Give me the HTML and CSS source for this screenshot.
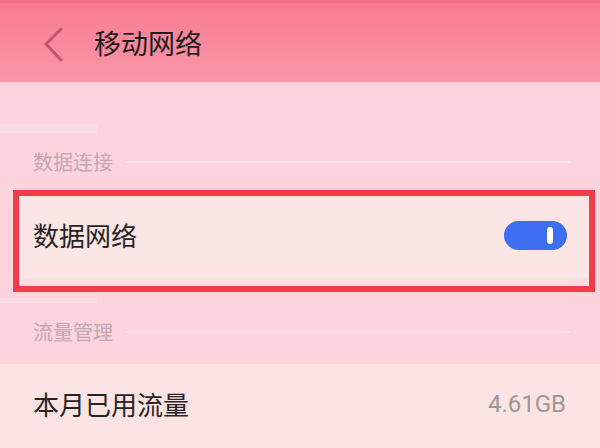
FILE: index.html
```html
<!DOCTYPE html>
<html lang="zh-CN">
<head>
  <meta charset="UTF-8">
  <title>移动网络</title>
  <link rel="stylesheet" href="styles.css">
</head>
<body>

<div class="page">
  <div class="header">
    <svg class="back" width="20" height="36" viewBox="0 0 20 36">
      <path d="M17 3 L2 18 L17 34" fill="none" stroke="#c4546f" stroke-width="3" stroke-linecap="round" stroke-linejoin="round"/>
    </svg>
    <h1 class="title">移动网络</h1>
  </div>

  <div class="main">
    <div class="ghost-bar top"></div>

    <div class="section-head">
      <span class="section-label">数据连接</span>
      <span class="section-line"></span>
    </div>

    <div class="highlight">
      <div class="row">
        <span class="row-text">数据网络</span>
        <span class="switch"><span class="knob"></span></span>
      </div>
      <div class="row-foot"></div>
    </div>

    <div class="ghost-bar bottom"></div>

    <div class="section-head second">
      <span class="section-label">流量管理</span>
      <span class="section-line"></span>
    </div>

    <div class="row usage">
      <span class="row-text">本月已用流量</span>
      <span class="value">4.61GB</span>
    </div>
  </div>
</div>

</body>
</html>
```

FILE: styles.css
```css
body { margin: 0; font-family: "Noto Sans CJK SC", "Noto Sans", sans-serif; background: #fdd3de; }
.page { width: 600px; height: 448px; overflow: hidden; }
.header { height: 79px; border-top: 3px solid #ef7088; background: linear-gradient(#f87b91, #fa96a8); display: flex; align-items: center; padding-left: 44px; }
.back { display: block; margin-top: 2px; }
.title { margin: 0 0 0 30px; font-size: 27px; font-weight: 400; color: #1c1c1c; line-height: 1; }
.main { background: #fdd3de; }
.ghost-bar { width: 97px; background: #fadde2; }
.ghost-bar.top { height: 9px; margin-top: 42px; }
.ghost-bar.bottom { height: 5px; margin-top: 6px; }
.section-head { display: flex; align-items: center; height: 28px; padding: 0 30px 0 33px; margin-top: 15px; }
.section-head.second { margin-top: 15px; }
.section-label { font-size: 20px; color: #c0a9b1; line-height: 28px; }
.section-line { flex: 1; height: 2px; background: #f8e3e7; margin-left: 12px; }
.highlight { margin: 14px 5px 0 13px; border: 6px solid #f23c47; background: #fbe5e5; }
.row { display: flex; align-items: center; justify-content: space-between; height: 82px; padding: 0 22px 0 14px; }
.row-text { font-size: 26px; color: #252525; line-height: 1; margin-top: -4px; }
.row-foot { height: 8px; background: #fcdde1; }
.switch { width: 63px; height: 29px; border-radius: 15px; background: #3f6ef1; display: flex; align-items: center; justify-content: flex-end; padding-right: 14px; box-sizing: border-box; margin-top: -4px; }
.knob { width: 6px; height: 17px; border-radius: 3px; background: #fff; }
.usage { margin-top: 18px; height: 90px; background: #fbe3e3; padding: 0 34px 0 33px; }
.usage .row-text { margin-top: -10px; }
.value { font-family: Roboto, "Noto Sans", sans-serif; font-size: 24px; color: #9c9898; line-height: 1; margin-top: -10px; }
```
